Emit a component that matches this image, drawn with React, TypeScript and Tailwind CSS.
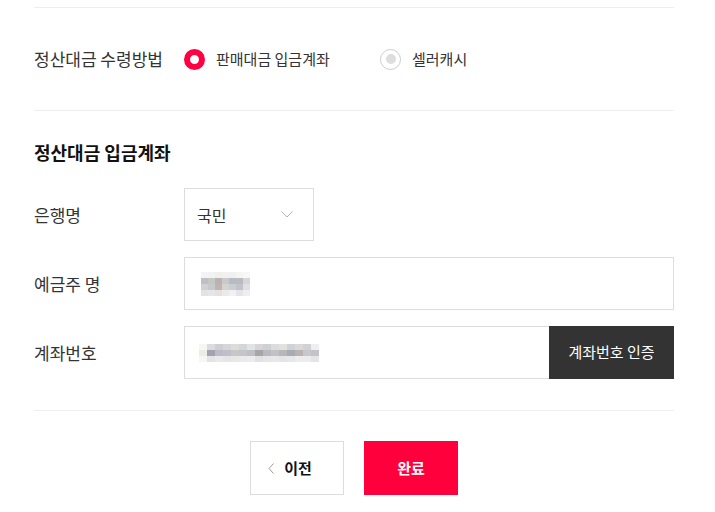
import React from "react";

// ─── Mosaic (blurred personal info) ───────────────────────────────────────────

const NAME_MOSAIC = [
  ["#f4f4f5", "#f2f2f3", "#efeff0", "#f3f0f0", "#eef1f3", "#f5f5f6", "#f8f8f9"],
  ["#c0bfc3", "#c4c8c4", "#bdb1b3", "#c9c8cc", "#b7bcc2", "#babbc0", "#d6d6da"],
  ["#cfd1d2", "#c7cacd", "#bfb4b2", "#d3d4cf", "#c9ced3", "#c2c3ca", "#dfe0e3"],
  ["#e3e3e5", "#e6e5ea", "#e6e1df", "#ebeaeb", "#f0f1f2", "#e5e5e7", "#eeeef0"],
];

const ACCOUNT_MOSAIC = [
  ["#f8f6f3", "#dcdbe0", "#cfced4", "#d6d6da", "#dedbd9", "#d4d5d8", "#e2e3e5", "#d6d6d9", "#cfd0d4", "#dcdcde", "#e2e1df", "#cfd2d6", "#d9d9dc", "#d2d2d5", "#eeeef0"],
  ["#efece8", "#a3a2ad", "#bdbcc6", "#c0bfc7", "#c6c7c9", "#c4c5c7", "#bfbfc4", "#a9a4a8", "#bab9c1", "#c1c1c6", "#b9b6b9", "#a9aab3", "#b9b3b1", "#c7c8cc", "#c3c4c8"],
  ["#f7f7f8", "#e4e4e7", "#e9e9eb", "#e5e5e7", "#e9e8e6", "#eaeaec", "#ececee", "#e1e1e3", "#e6e6e9", "#e8e8ea", "#e4e4e6", "#e7e7ea", "#ececee", "#ececee", "#e4e4e6"],
];

function Mosaic({ rows, cell }: { rows: string[][]; cell: string }) {
  return (
    <div className="flex flex-col">
      {rows.map((row, i) => (
        <div key={i} className="flex">
          {row.map((c, j) => (
            <span key={j} className={`h-[6px] ${cell}`} style={{ backgroundColor: c }} />
          ))}
        </div>
      ))}
    </div>
  );
}

// ─── Radio ────────────────────────────────────────────────────────────────────

function Radio({ label, checked }: { label: string; checked?: boolean }) {
  return (
    <label className="flex items-center gap-[11px]">
      {checked ? (
        <span className="h-[21px] w-[21px] rounded-full border-[6px] border-[#ff0040] bg-white" />
      ) : (
        <span className="flex h-[21px] w-[21px] items-center justify-center rounded-full border border-[#cccccc] bg-white">
          <span className="h-[10px] w-[10px] rounded-full bg-[#dddddd]" />
        </span>
      )}
      <span className="text-[15px] text-[#333333]">{label}</span>
    </label>
  );
}

// ─── Form row ─────────────────────────────────────────────────────────────────

function Row({ label, children }: { label: string; children: React.ReactNode }) {
  return (
    <div className="flex items-center">
      <div className="w-[150px] shrink-0 text-[17px] text-[#333333]">{label}</div>
      {children}
    </div>
  );
}

// ─── App ──────────────────────────────────────────────────────────────────────

export default function App() {
  return (
    <div
      className="min-h-[512px] bg-white px-[34px]"
      style={{ fontFamily: '"Noto Sans CJK KR", "Noto Sans", sans-serif' }}
    >
      <div className="w-[640px] pt-[7px]">
        {/* ── Payment method ── */}
        <div className="flex h-[104px] items-center border-y border-[#eeeeee]">
          <div className="w-[150px] shrink-0 text-[17px] text-[#333333]">정산대금 수령방법</div>
          <div className="w-[196px]">
            <Radio label="판매대금 입금계좌" checked />
          </div>
          <Radio label="셀러캐시" />
        </div>

        {/* ── Account ── */}
        <h2 className="mt-[29px] text-[18px] font-bold leading-6 text-[#111111]">정산대금 입금계좌</h2>

        <div className="mt-[24px] flex flex-col gap-[16px]">
          <Row label="은행명">
            <button
              type="button"
              className="flex h-[53px] w-[130px] items-center justify-between border border-[#dddddd] pl-[12px] pr-[20px] text-[16px] text-[#333333]"
            >
              국민
              <svg width="12" height="7" viewBox="0 0 12 7" fill="none" stroke="#b5b5b5" strokeWidth="1">
                <path d="M0.5 0.5 6 6 11.5 0.5" />
              </svg>
            </button>
          </Row>

          <Row label="예금주 명">
            <div className="flex h-[53px] flex-1 items-center border border-[#dddddd] pl-[16px]">
              <Mosaic rows={NAME_MOSAIC} cell="w-[7px]" />
            </div>
          </Row>

          <Row label="계좌번호">
            <div className="flex h-[53px] flex-1">
              <div className="flex flex-1 items-center border border-r-0 border-[#dddddd] pl-[14px]">
                <Mosaic rows={ACCOUNT_MOSAIC} cell="w-[8px]" />
              </div>
              <button type="button" className="w-[125px] bg-[#333333] text-[15px] text-white">
                계좌번호 인증
              </button>
            </div>
          </Row>
        </div>

        {/* ── Actions ── */}
        <div className="mt-[31px] flex justify-center gap-[20px] border-t border-[#eeeeee] pt-[30px]">
          <button
            type="button"
            className="flex h-[54px] w-[94px] items-center justify-center gap-[10px] border border-[#dddddd] bg-white pr-[14px] text-[15px] font-bold text-[#111111]"
          >
            <svg width="6" height="11" viewBox="0 0 6 11" fill="none" stroke="#999999" strokeWidth="1">
              <path d="M5.5 0.5 1 5.5 5.5 10.5" />
            </svg>
            이전
          </button>
          <button
            type="button"
            className="h-[54px] w-[94px] bg-[#ff003c] text-[15px] font-bold text-white"
          >
            완료
          </button>
        </div>
      </div>
    </div>
  );
}
